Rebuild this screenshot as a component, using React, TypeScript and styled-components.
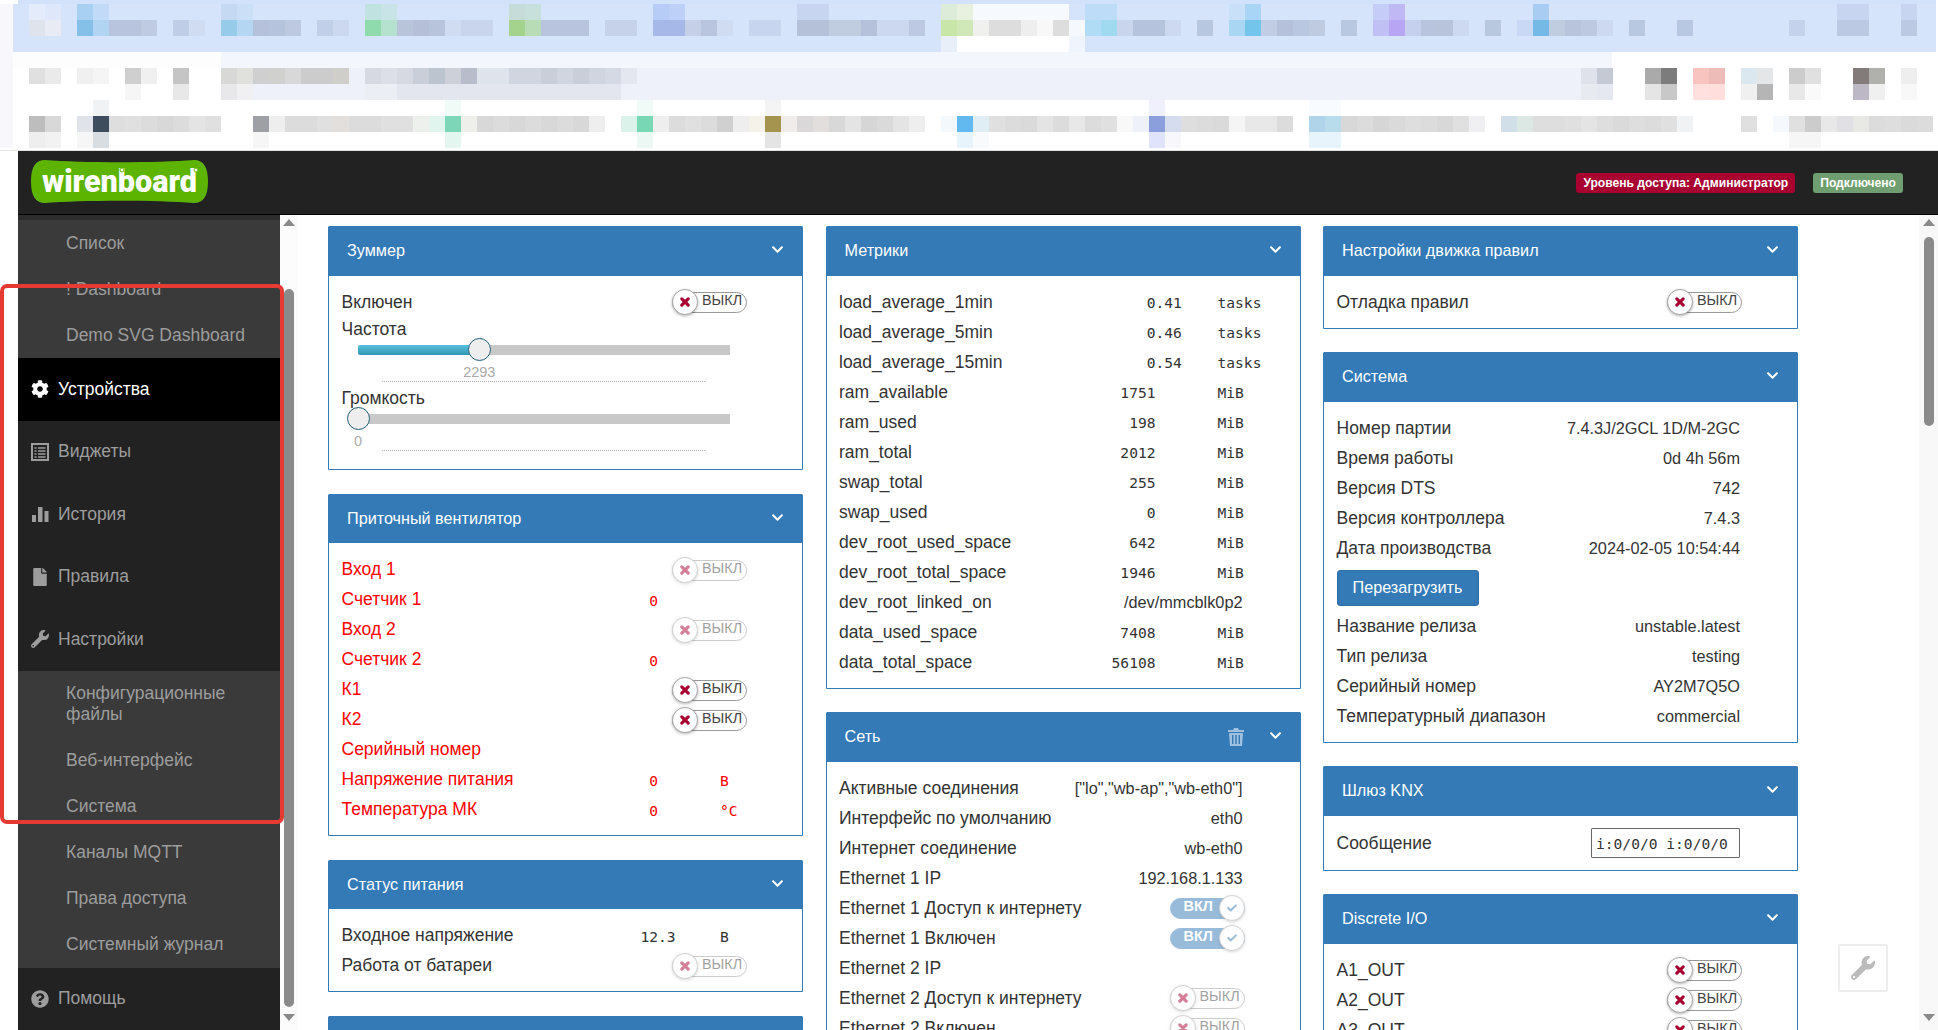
import React from 'react';
import styled, { createGlobalStyle } from 'styled-components';
import { FaCog, FaFile, FaWrench, FaQuestionCircle, FaChevronDown, FaCheck } from 'react-icons/fa';

const Global = createGlobalStyle`
  html, body { margin: 0; padding: 0; height: 100%; overflow: hidden; background: #fff; }
  body { font-family: "Liberation Sans", Arial, sans-serif; font-size: 17.5px; color: #333; }
  * { box-sizing: border-box; }
`;

const Page = styled.div`
  position: relative;
  display: flex;
  flex-direction: column;
  height: 1030px;
  overflow: hidden;
`;
const Strip = styled.svg`
  display: block;
  flex: none;
  border-bottom: 1px solid #e2e2e2;
`;
const Shell = styled.div`
  flex: 1;
  min-height: 0;
  display: flex;
  flex-direction: column;
  padding-left: 18px;
`;
const TopBar = styled.header`
  flex: none;
  height: 64px;
  background: #222;
  border-bottom: 1px solid #000;
  display: flex;
  align-items: center;
  padding: 0 35px 2px 13px;
`;
const Logo = styled.svg`
  display: block;
  flex: none;
`;
const Badges = styled.div`
  margin-left: auto;
  display: flex;
  gap: 18px;
  margin-top: 3px;
`;
const Badge = styled.span<{ $bg: string }>`
  height: 20px;
  line-height: 20px;
  padding: 0 7px;
  border-radius: 3px;
  background: ${p => p.$bg};
  color: #fff;
  font-size: 12.1px;
  font-weight: 700;
  white-space: nowrap;
`;
const Body = styled.div`
  flex: 1;
  min-height: 0;
  display: flex;
`;
const Side = styled.nav`
  flex: none;
  width: 262px;
  background: #222;
  overflow: hidden;
`;
const SubList = styled.div<{ $top?: boolean }>`
  background: #3a3a3a;
  ${p => (p.$top ? 'border-top: 5px solid #2d2d2d;' : '')}
`;
const SubItem = styled.div`
  padding: 12.5px 30px 12.5px 48px;
  line-height: 21px;
  font-size: 17.5px;
  color: #9d9d9d;
`;
const MainItem = styled.div<{ $active?: boolean }>`
  height: 62.5px;
  display: flex;
  align-items: center;
  gap: 9px;
  padding-left: 13px;
  font-size: 17.5px;
  color: ${p => (p.$active ? '#fff' : '#9d9d9d')};
  background: ${p => (p.$active ? '#000' : 'transparent')};
  svg { flex: none; width: 18px; height: 18px; display: block; }
`;
const Track = styled.div<{ $bg: string; $w: number }>`
  flex: none;
  width: ${p => p.$w}px;
  background: ${p => p.$bg};
  display: flex;
  flex-direction: column;
  align-items: center;
  padding: 4px 0 9px;
`;
const ArrowUp = styled.div`
  flex: none;
  width: 0;
  height: 0;
  border-left: 6px solid transparent;
  border-right: 6px solid transparent;
  border-bottom: 7px solid #8a8a8a;
`;
const ArrowDown = styled.div`
  flex: none;
  width: 0;
  height: 0;
  margin-top: auto;
  border-left: 6px solid transparent;
  border-right: 6px solid transparent;
  border-top: 7px solid #8a8a8a;
`;
const Thumb = styled.div<{ $top: number; $h: number }>`
  flex: none;
  width: 10px;
  margin-top: ${p => p.$top}px;
  height: ${p => p.$h}px;
  border-radius: 5px;
  background: #8a8a8a;
`;
const Content = styled.main`
  flex: 1;
  min-width: 0;
  overflow: hidden;
  padding: 11px 0 0 30px;
  display: grid;
  grid-template-columns: repeat(3, 475px);
  column-gap: 22.5px;
  align-content: start;
`;
const Column = styled.div`
  display: flex;
  flex-direction: column;
  gap: 23.5px;
`;
const Panel = styled.section`
  border: 1px solid #337ab7;
  border-radius: 2px 2px 0 0;
  flex: none;
`;
const PanelHead = styled.div`
  height: 49.5px;
  margin: -1px -1px 0;
  padding: 0 19px 0 19px;
  background: #337ab7;
  color: #fff;
  font-size: 16.2px;
  display: flex;
  align-items: center;
  border-radius: 2px 2px 0 0;
`;
const HeadTitle = styled.span`
  flex: 1;
`;
const Trash = styled.svg`
  display: block;
  margin-right: 25px;
`;
const Chevron = styled(FaChevronDown)`
  display: block;
  width: 13px;
  height: 13px;
  margin-top: -2px;
`;
const PanelBody = styled.div`
  padding: 10.5px 55px 11.5px 12.5px;
`;
const Row = styled.div<{ $red?: boolean }>`
  display: flex;
  align-items: center;
  justify-content: space-between;
  min-height: 30px;
  padding-top: 2px;
  color: ${p => (p.$red ? '#f00' : '#333')};
  white-space: nowrap;
`;
const InputRow = styled(Row)`
  min-height: 32px;
  padding-top: 2px;
`;
const RowLabel = styled.span``;
const RowValue = styled.span`
  padding-right: 2px;
  font-size: 16.3px;
`;
const NumCells = styled.span`
  display: grid;
  grid-template-columns: 66px 62px 27px;
  font-family: "DejaVu Sans Mono", "Liberation Mono", monospace;
  font-size: 14.6px;
  padding-top: 1px;
`;
const NumInt = styled.span`
  text-align: right;
`;
const NumFrac = styled.span``;
const NumUnit = styled.span``;
const Switch = styled.span<{ $on?: boolean; $dim?: boolean }>`
  position: relative;
  display: block;
  width: 75px;
  height: 21px;
  margin: 1px 0 0;
  border: 1px solid #999;
  border-radius: 11px;
  background: ${p => (p.$on ? '#337ab7' : '#fff')};
  opacity: ${p => (p.$dim ? 0.5 : 1)};
  ${p => (p.$on ? 'border-color: #337ab7;' : '')}
`;
const SwitchText = styled.span<{ $on?: boolean }>`
  position: absolute;
  top: -1px;
  line-height: 17px;
  font-size: 14.4px;
  ${p => (p.$on ? 'left: 13px; color: #fff; font-weight: 700;' : 'left: 29px; color: #444;')}
`;
const Knob = styled.span<{ $on?: boolean }>`
  position: absolute;
  top: -4px;
  ${p => (p.$on ? 'right: -1px;' : 'left: -1px;')}
  width: 26px;
  height: 26px;
  border-radius: 50%;
  background: #fff;
  border: 1px solid #a8a8a8;
  box-shadow: 0 1px 3px rgba(0, 0, 0, 0.3);
  display: flex;
  align-items: center;
  justify-content: center;
  color: ${p => (p.$on ? '#337ab7' : '#a80030')};
  svg { width: 10px; height: 10px; display: block; }
`;
const Slider = styled.div`
  margin-bottom: 3px;
  &:last-child { margin-bottom: 6.5px; }
`;
const SliderLabel = styled.div`
  height: 25px;
  line-height: 27px;
`;
const SliderTrack = styled.div`
  position: relative;
  margin: 4px 0 0 16.5px;
  width: 372px;
  height: 10px;
  background: #c8c8c8;
`;
const SliderFill = styled.div`
  height: 100%;
  border-radius: 3px 0 0 3px;
  background: linear-gradient(#5bc0de, #2f96b4);
`;
const SliderThumb = styled.div`
  position: absolute;
  top: -7px;
  width: 23px;
  height: 23px;
  margin-left: -11.5px;
  border-radius: 50%;
  background: #eee;
  border: 1.5px solid #1f6078;
`;
const SliderScale = styled.div`
  position: relative;
  height: 27px;
  margin-left: 16.5px;
  width: 372px;
`;
const ScaleLine = styled.div`
  position: absolute;
  left: 24px;
  right: 25px;
  bottom: 0;
  border-bottom: 1px dotted #aaa;
`;
const ScaleValue = styled.span`
  position: absolute;
  top: 9px;
  transform: translateX(-50%);
  font-size: 14.5px;
  line-height: 16px;
  color: #aaa;
`;
const RebootBtn = styled.button`
  display: block;
  width: 142px;
  height: 36px;
  margin: 7.5px 0 4.5px;
  padding: 0;
  border: 1px solid #2e6da4;
  border-radius: 3px;
  background: #337ab7;
  color: #fff;
  font: 16.2px "Liberation Sans", Arial, sans-serif;
`;
const MsgInput = styled.input`
  width: 149px;
  height: 30px;
  margin-right: 2px;
  padding: 0 4px;
  border: 1px solid #666;
  border-radius: 1px;
  font-family: "DejaVu Sans Mono", monospace;
  font-size: 14.6px;
  color: #333;
  background: #fff;
`;
const RedFrame = styled.div`
  position: absolute;
  left: 0;
  top: 284px;
  width: 284px;
  height: 540px;
  border: 4.5px solid #e53b32;
  border-radius: 7px;
  pointer-events: none;
`;
const FloatTool = styled.button`
  position: absolute;
  right: 50px;
  bottom: 38px;
  width: 50px;
  height: 48px;
  padding: 0;
  background: #fff;
  border: 2px solid #eee;
  border-radius: 2px;
  display: flex;
  align-items: center;
  justify-content: center;
  color: #bbb;
  svg { width: 24px; height: 24px; display: block; }
`;

type Item = {
  l: string;
  v?: string;
  n?: string;
  u?: string;
  off?: boolean;
  on?: boolean;
  dim?: boolean;
  red?: boolean;
};

const Cross = () => (
  <svg viewBox="0 0 11 11" fill="none" stroke="currentColor" strokeWidth="3.4" strokeLinecap="round">
    <path d="M2 2l7 7M9 2l-7 7" />
  </svg>
);

const Rows = ({ items }: { items: Item[] }) => (
  <>
    {items.map(it => {
      const [i, f] = (it.n ?? '').split('.');
      return (
        <Row key={it.l} $red={it.red}>
          <RowLabel>{it.l}</RowLabel>
          {it.v && <RowValue>{it.v}</RowValue>}
          {it.n !== undefined && (
            <NumCells>
              <NumInt>{i}</NumInt>
              <NumFrac>{f ? '.' + f : ''}</NumFrac>
              <NumUnit>{it.u}</NumUnit>
            </NumCells>
          )}
          {(it.off || it.on) && (
            <Switch $on={it.on} $dim={it.dim || it.on}>
              <SwitchText $on={it.on}>{it.on ? 'ВКЛ' : 'ВЫКЛ'}</SwitchText>
              <Knob $on={it.on}>{it.on ? <FaCheck /> : <Cross />}</Knob>
            </Switch>
          )}
        </Row>
      );
    })}
  </>
);

const Card = ({ title, trash, children }: { title?: string; trash?: boolean; children?: React.ReactNode }) => (
  <Panel>
    <PanelHead>
      <HeadTitle>{title}</HeadTitle>
      {trash && (
        <Trash width="16" height="18" viewBox="0 0 16 18" fill="#9fc0de">
          <path d="M6 0h4l1 2h5v2H0V2h5zM1 5h14l-1 13H2zm3 2v9h1.4V7zm3.3 0v9h1.4V7zm3.3 0v9H12V7z" />
        </Trash>
      )}
      <Chevron />
    </PanelHead>
    {children && <PanelBody>{children}</PanelBody>}
  </Panel>
);

const SliderBlock = ({ label, value, pct }: { label: string; value: string; pct: number }) => (
  <Slider>
    <SliderLabel>{label}</SliderLabel>
    <SliderTrack>
      <SliderFill style={{ width: `${pct}%` }} />
      <SliderThumb style={{ left: `${pct}%` }} />
    </SliderTrack>
    <SliderScale>
      <ScaleValue style={{ left: `${pct}%` }}>{value}</ScaleValue>
      <ScaleLine />
    </SliderScale>
  </Slider>
);

/* the pixelated (censored) strip at the top of the screenshot */
const seq = (start: number, colors: string) =>
  colors.split(' ').map((c, i) => [start + i, c] as [number, string]);
const grey = (start: number, n: number, c: string) =>
  Array.from({ length: n }, (_, i) => [start + i, c] as [number, string]);

const pixelRows: { y: number; cells: [number, string][] }[] = [
  {
    y: 4,
    cells: [
      ...seq(1, '#e4ecfb #dfe8fa'), ...seq(4, '#a8d0f2 #c0daf8'), ...seq(13, '#c5d9f3 #cbdff6'), ...seq(22, '#c0e2e0 #c8e4e6'),
      ...seq(31, '#c5dcd8 #c8e0dc'), ...seq(40, '#b8ccf8 #bcd0f8'), ...seq(49, '#c8d5f0 #c8d5f0'), ...seq(58, '#dcecd8 #e8f0e0'),
      ...grey(60, 6, '#f6f9fe'), ...seq(67, '#bcdcf8 #bcdcf8'), ...seq(76, '#c8e0f8 #a8d4f5'), ...seq(85, '#c5ccf8 #c0b8f5'),
      [95, '#a8ccf2'], ...seq(114, '#c8d5f0 #c8d5f0'), [118, '#c8d5f0'],
    ],
  },
  {
    y: 20,
    cells: [
      ...seq(1, '#dfe3ec #e8ebf3'), ...seq(4, '#84c0e8 #b0d4f2 #b8c4de #b8c4de #bfcbe2'), ...seq(10, '#c0cde6 #d0dcf2'),
      ...seq(13, '#96cbe9 #b4d6f3 #b5c1da #b6c3dc #bcc9e0'), ...seq(19, '#c2cfe8 #cbd8ef'),
      ...seq(22, '#90dbae #b5e2cf #b8c4da #b5c0d8 #b8c3dc #d0dcf2 #c8d5ec #c8d5ec'),
      ...seq(31, '#a3d38c #b8dcb5 #b8c4de #b8c4de #b8c4de'), ...seq(37, '#c5d2ea #c5d2ea'),
      ...seq(40, '#a5b8e8 #a5b8e8 #c5d0e8 #b9c5de #d0dcf2'), ...seq(46, '#c8d5ee #c8d5ee'),
      ...seq(49, '#b5c1d8 #b5c1d8 #c0cce0 #c0cce0 #b5c0da #ccd8f0 #ccd8f0 #bdc9e2'),
      ...seq(58, '#c8e6a8 #d0e8b8 #f0f0ee #ddd #ddd #eee #f8f8f8 #ddd #f5f8fd'),
      ...seq(67, '#b0dcf5 #a0daf0 #c8d5ec #b5c3dc #b5c3dc #cdd9f0'), [74, '#b8c7e0'],
      ...seq(76, '#a8d6f3 #73c5ec #c0cde5 #b5c1da #bac7e0 #bfcbe0'), [83, '#b8c8e0'],
      ...seq(85, '#c0c0f5 #b8a5f3 #c5d0ee #b8c3de #b8c3dc #cdd9f0'), [92, '#b8c8de'],
      ...seq(94, '#c8d8f5 #75b9e6 #c0cce0 #b8c4dc #bcc9e0 #cdd9f0'), [101, '#b8c8e0'], [104, '#b9c8e2'],
      [111, '#c5d2ec'], ...seq(114, '#bcc9e3 #bcc9e3'), [118, '#bcc9e3'],
    ],
  },
  { y: 36, cells: [...grey(58, 1, '#e8eff9'), ...grey(59, 7, '#fff'), [66, '#f0f5fd']] },
  {
    y: 68,
    cells: [
      ...seq(1, '#e0e0e0 #eaeaea'), ...seq(4, '#f0f0f0 #f5f5f5'), ...seq(7, '#cfcfcf #f0f0f0'), [10, '#c5c5c5'],
      ...seq(13, '#d8d8d6 #e0e0dc #cfcfcf #d0d0ce #d8d8d8 #ccc #ccc #d0cec8'),
      ...seq(22, '#d6d9e2 #dcdfe8 #d6d9e2 #c9ced8 #bbc4cf #cdd0d8 #b9bdcb #dfe3ec #dfe3ec #d0d5e0 #d0d5e0 #c9ced8 #d0d5e0 #c9ced8 #d0d5e0 #d5d9e4 #e4e7f0'),
      ...seq(98, '#dfe2ea #c5c9d4'), ...seq(102, '#aaa #7c7c7c'), ...seq(105, '#f8c4c0 #eebcb8'), ...seq(108, '#dce8f0 #e4e6e8'),
      ...seq(111, '#ccc #e0e0e0'), ...seq(115, '#837a7a #b0b0ac'), [118, '#eee'],
    ],
  },
  {
    y: 84,
    cells: [
      [7, '#f6f6f6'], [10, '#e8e8e8'], ...seq(13, '#e8e8ea #f0f0f2'), ...grey(22, 2, '#eceef5'), ...grey(24, 14, '#e3e6ef'),
      ...seq(98, '#e8eaf2 #e5e8f0'), ...seq(102, '#e5e5e5 #c8c8c8'), ...seq(105, '#ffe0de #ffdedc'), ...seq(108, '#f0f0f0 #b5b5b5'),
      ...seq(111, '#e8e8e8 #fafafa'), ...seq(115, '#bdb8c6 #f0f0f0'), [118, '#f8f8f8'],
    ],
  },
  {
    y: 100,
    cells: [[5, '#f0f2f4'], [27, '#f0faf6'], [39, '#f0faf6'], [47, '#f4f4f4'], [71, '#f0f0fc'], [81, '#f8fbff'], [82, '#f8fbff']],
  },
  {
    y: 116,
    cells: [
      ...seq(1, '#bdbdbd #d8d8d8'), ...seq(4, '#e0e3ea #3d4d5e'), ...seq(6, '#dedede #e0e0e0 #dcdcdc #d8d8d8 #dcdcdc #e4e4e4 #e0e0e0'),
      ...seq(15, '#9fa0a6 #eeeeee'), ...seq(17, '#dcdcdc #dcdcdc #e0e0e0 #e2dfdc #dcdcdc #dcdcdc #e0e0e0 #e0e0e0 #eef0ee #e0f5ee #7dd6b8 #eeeeea'),
      ...seq(29, '#d8d8d8 #dcdcdc #d8d8d8 #dcdcdc #d8d8d8 #dcdcdc #d8d8d8 #eee'), ...seq(38, '#daf2ea #78d8b5 #eee'),
      ...seq(41, '#dcdcdc #e0e0e0 #dcdcdc #d0d0d0 #eee #f5f2ea #a5944f #f0ecec'),
      ...seq(49, '#dad8d8 #e2dede #d8d8d8 #e4e4e4 #d6d6d6 #dadada #e4e4e4 #eee'), ...seq(58, '#f2f8fc #62b9f0 #dfeef5'),
      ...seq(61, '#e0e0e0 #dcdcdc #dadada #e4e4e4 #dcdcdc #e8e8e8 #dcdcdc #e0e0e0 #f8f8f8 #eef0fa #8b9fdc #d5dcef'),
      ...seq(73, '#dedede #dcdcdc #dadada #f5f5f5 #e8e8e8 #e8e8e8 #dcdcdc'),
      ...seq(81, '#b0d4ea #b8dcec #d8d8d8 #dcdcdc #d6d6d6 #dadada #dedede #dcdcdc #d8d8d8 #e0e0e0 #f0f0f2'),
      ...seq(93, '#d0dfe8 #dce8e4 #dedede #dedede #e0e0e0 #e4e4e4 #dedede #dadada #dedede #dcdcdc #e0e0e0 #f0f2f4'), [108, '#e0e0e0'],
      ...seq(110, '#f5f8fc #e0e0e0 #ccc #e8e8e8 #e0e0e5 #e8e8e5 #dcdcdc #dedede #dadada #dcdcdc'),
    ],
  },
  {
    y: 132,
    cells: [
      ...seq(1, '#eee #f2f2f2'), ...seq(4, '#f6f6f6 #d8dde2'), [15, '#f6f6f6'], [27, '#e4f6f0'], [39, '#ecf8f4'], [47, '#e4e4e4'],
      ...seq(59, '#e8f4fc #f8fafc'), ...seq(71, '#dfe3fb #f8f8fc'), ...seq(81, '#e8f4fc #e8f4fc'), ...seq(111, '#f6f6f6 #f6f6f6'),
    ],
  },
];

const PixelStrip = () => (
  <Strip width="1938" height="151" viewBox="0 0 1938 150" shapeRendering="crispEdges">
    <rect x="0" y="0" width="1938" height="150" fill="#fff" />
    <rect x="0" y="4" width="13" height="144" fill="#f8f8fc" />
    <rect x="18" y="0" width="1918" height="4" fill="#d3e2fb" />
    <rect x="13" y="4" width="1923" height="48" fill="#d6e4fb" />
    <rect x="13" y="52" width="208" height="16" fill="#fdfdfe" />
    <rect x="221" y="52" width="1391" height="16" fill="#f3f6fc" />
    <rect x="221" y="68" width="1361" height="32" fill="#eef1f9" />
    {pixelRows.map(r =>
      r.cells.map(([k, c]) => <rect key={`${r.y}-${k}`} x={13 + 16 * k} y={r.y} width="16" height="16" fill={c} />)
    )}
  </Strip>
);

const fan: Item[] = [
  { l: 'Вход 1', off: true, dim: true, red: true },
  { l: 'Счетчик 1', n: '0', red: true },
  { l: 'Вход 2', off: true, dim: true, red: true },
  { l: 'Счетчик 2', n: '0', red: true },
  { l: 'К1', off: true, red: true },
  { l: 'К2', off: true, red: true },
  { l: 'Серийный номер', red: true },
  { l: 'Напряжение питания', n: '0', u: 'В', red: true },
  { l: 'Температура МК', n: '0', u: '°C', red: true },
];
const metrics: Item[] = [
  { l: 'load_average_1min', n: '0.41', u: 'tasks' },
  { l: 'load_average_5min', n: '0.46', u: 'tasks' },
  { l: 'load_average_15min', n: '0.54', u: 'tasks' },
  { l: 'ram_available', n: '1751', u: 'MiB' },
  { l: 'ram_used', n: '198', u: 'MiB' },
  { l: 'ram_total', n: '2012', u: 'MiB' },
  { l: 'swap_total', n: '255', u: 'MiB' },
  { l: 'swap_used', n: '0', u: 'MiB' },
  { l: 'dev_root_used_space', n: '642', u: 'MiB' },
  { l: 'dev_root_total_space', n: '1946', u: 'MiB' },
  { l: 'dev_root_linked_on', v: '/dev/mmcblk0p2' },
  { l: 'data_used_space', n: '7408', u: 'MiB' },
  { l: 'data_total_space', n: '56108', u: 'MiB' },
];
const net: Item[] = [
  { l: 'Активные соединения', v: '["lo","wb-ap","wb-eth0"]' },
  { l: 'Интерфейс по умолчанию', v: 'eth0' },
  { l: 'Интернет соединение', v: 'wb-eth0' },
  { l: 'Ethernet 1 IP', v: '192.168.1.133' },
  { l: 'Ethernet 1 Доступ к интернету', on: true },
  { l: 'Ethernet 1 Включен', on: true },
  { l: 'Ethernet 2 IP' },
  { l: 'Ethernet 2 Доступ к интернету', off: true, dim: true },
  { l: 'Ethernet 2 Включен', off: true, dim: true },
];
const sys1: Item[] = [
  { l: 'Номер партии', v: '7.4.3J/2GCL 1D/M-2GC' },
  { l: 'Время работы', v: '0d 4h 56m' },
  { l: 'Версия DTS', v: '742' },
  { l: 'Версия контроллера', v: '7.4.3' },
  { l: 'Дата производства', v: '2024-02-05 10:54:44' },
];
const sys2: Item[] = [
  { l: 'Название релиза', v: 'unstable.latest' },
  { l: 'Тип релиза', v: 'testing' },
  { l: 'Серийный номер', v: 'AY2M7Q5O' },
  { l: 'Температурный диапазон', v: 'commercial' },
];

const Bars = () => (
  <svg viewBox="0 0 18 18" fill="currentColor">
    <rect x="1" y="10" width="4" height="7" />
    <rect x="7" y="2" width="4.5" height="15" />
    <rect x="13.5" y="6" width="4" height="11" />
  </svg>
);
const ListBox = () => (
  <svg viewBox="0 0 18 18" fill="none" stroke="currentColor">
    <rect x="1" y="1" width="16" height="16" strokeWidth="2" />
    <path d="M3.5 5h2M7 5h7.5M3.5 8h2M7 8h7.5M3.5 11h2M7 11h7.5M3.5 14h2M7 14h7.5" strokeWidth="1.6" />
  </svg>
);

export default function App() {
  return (
    <>
      <Global />
      <Page>
        <PixelStrip />
        <Shell>
          <TopBar>
            <Logo width="177" height="43" viewBox="0 0 177 43">
              <path d="M14 0C50 3 127 3 163 0C172 0 177 6 177 21.5C177 37 172 43 163 43C127 40 50 40 14 43C5 43 0 37 0 21.5C0 6 5 0 14 0Z" fill="#5cb400" />
              <text x="11" y="32" fill="#fff" fontFamily="Roboto, 'Liberation Sans', sans-serif" fontWeight="900" fontSize="31" textLength="155" lengthAdjust="spacingAndGlyphs">wirenboard</text>
              <circle cx="91" cy="10" r="2" fill="#fff" stroke="#5cb400" strokeWidth="1" />
              <circle cx="165" cy="10" r="2" fill="#fff" stroke="#5cb400" strokeWidth="1" />
            </Logo>
            <Badges>
              <Badge $bg="#a80030">Уровень доступа: Администратор</Badge>
              <Badge $bg="#6f9e70">Подключено</Badge>
            </Badges>
          </TopBar>
          <Body>
            <Side>
              <SubList $top>
                <SubItem>Список</SubItem>
                <SubItem>! Dashboard</SubItem>
                <SubItem>Demo SVG Dashboard</SubItem>
              </SubList>
              <MainItem $active><FaCog />Устройства</MainItem>
              <MainItem><ListBox />Виджеты</MainItem>
              <MainItem><Bars />История</MainItem>
              <MainItem><FaFile />Правила</MainItem>
              <MainItem><FaWrench />Настройки</MainItem>
              <SubList>
                <SubItem>Конфигурационные файлы</SubItem>
                <SubItem>Веб-интерфейс</SubItem>
                <SubItem>Система</SubItem>
                <SubItem>Каналы MQTT</SubItem>
                <SubItem>Права доступа</SubItem>
                <SubItem>Системный журнал</SubItem>
              </SubList>
              <MainItem><FaQuestionCircle />Помощь</MainItem>
            </Side>
            <Track $bg="#fcfcfc" $w={18}>
              <ArrowUp />
              <Thumb $top={63} $h={718} />
              <ArrowDown />
            </Track>
            <Content>
              <Column>
                <Card title="Зуммер">
                  <Rows items={[{ l: 'Включен', off: true }]} />
                  <SliderBlock label="Частота" value="2293" pct={32.6} />
                  <SliderBlock label="Громкость" value="0" pct={0} />
                </Card>
                <Card title="Приточный вентилятор"><Rows items={fan} /></Card>
                <Card title="Статус питания">
                  <Rows items={[{ l: 'Входное напряжение', n: '12.3', u: 'В' }, { l: 'Работа от батареи', off: true, dim: true }]} />
                </Card>
                <Card />
              </Column>
              <Column>
                <Card title="Метрики"><Rows items={metrics} /></Card>
                <Card title="Сеть" trash><Rows items={net} /></Card>
              </Column>
              <Column>
                <Card title="Настройки движка правил"><Rows items={[{ l: 'Отладка правил', off: true }]} /></Card>
                <Card title="Система">
                  <Rows items={sys1} />
                  <RebootBtn>Перезагрузить</RebootBtn>
                  <Rows items={sys2} />
                </Card>
                <Card title="Шлюз KNX">
                  <InputRow>
                    <RowLabel>Сообщение</RowLabel>
                    <MsgInput readOnly value="i:0/0/0 i:0/0/0" />
                  </InputRow>
                </Card>
                <Card title="Discrete I/O">
                  <Rows items={[{ l: 'A1_OUT', off: true }, { l: 'A2_OUT', off: true }, { l: 'A3_OUT', off: true }]} />
                </Card>
              </Column>
            </Content>
            <Track $bg="#f8f8f8" $w={19}>
              <ArrowUp />
              <Thumb $top={11} $h={189} />
              <ArrowDown />
            </Track>
          </Body>
        </Shell>
        <RedFrame />
        <FloatTool aria-label="tools"><FaWrench /></FloatTool>
      </Page>
    </>
  );
}
